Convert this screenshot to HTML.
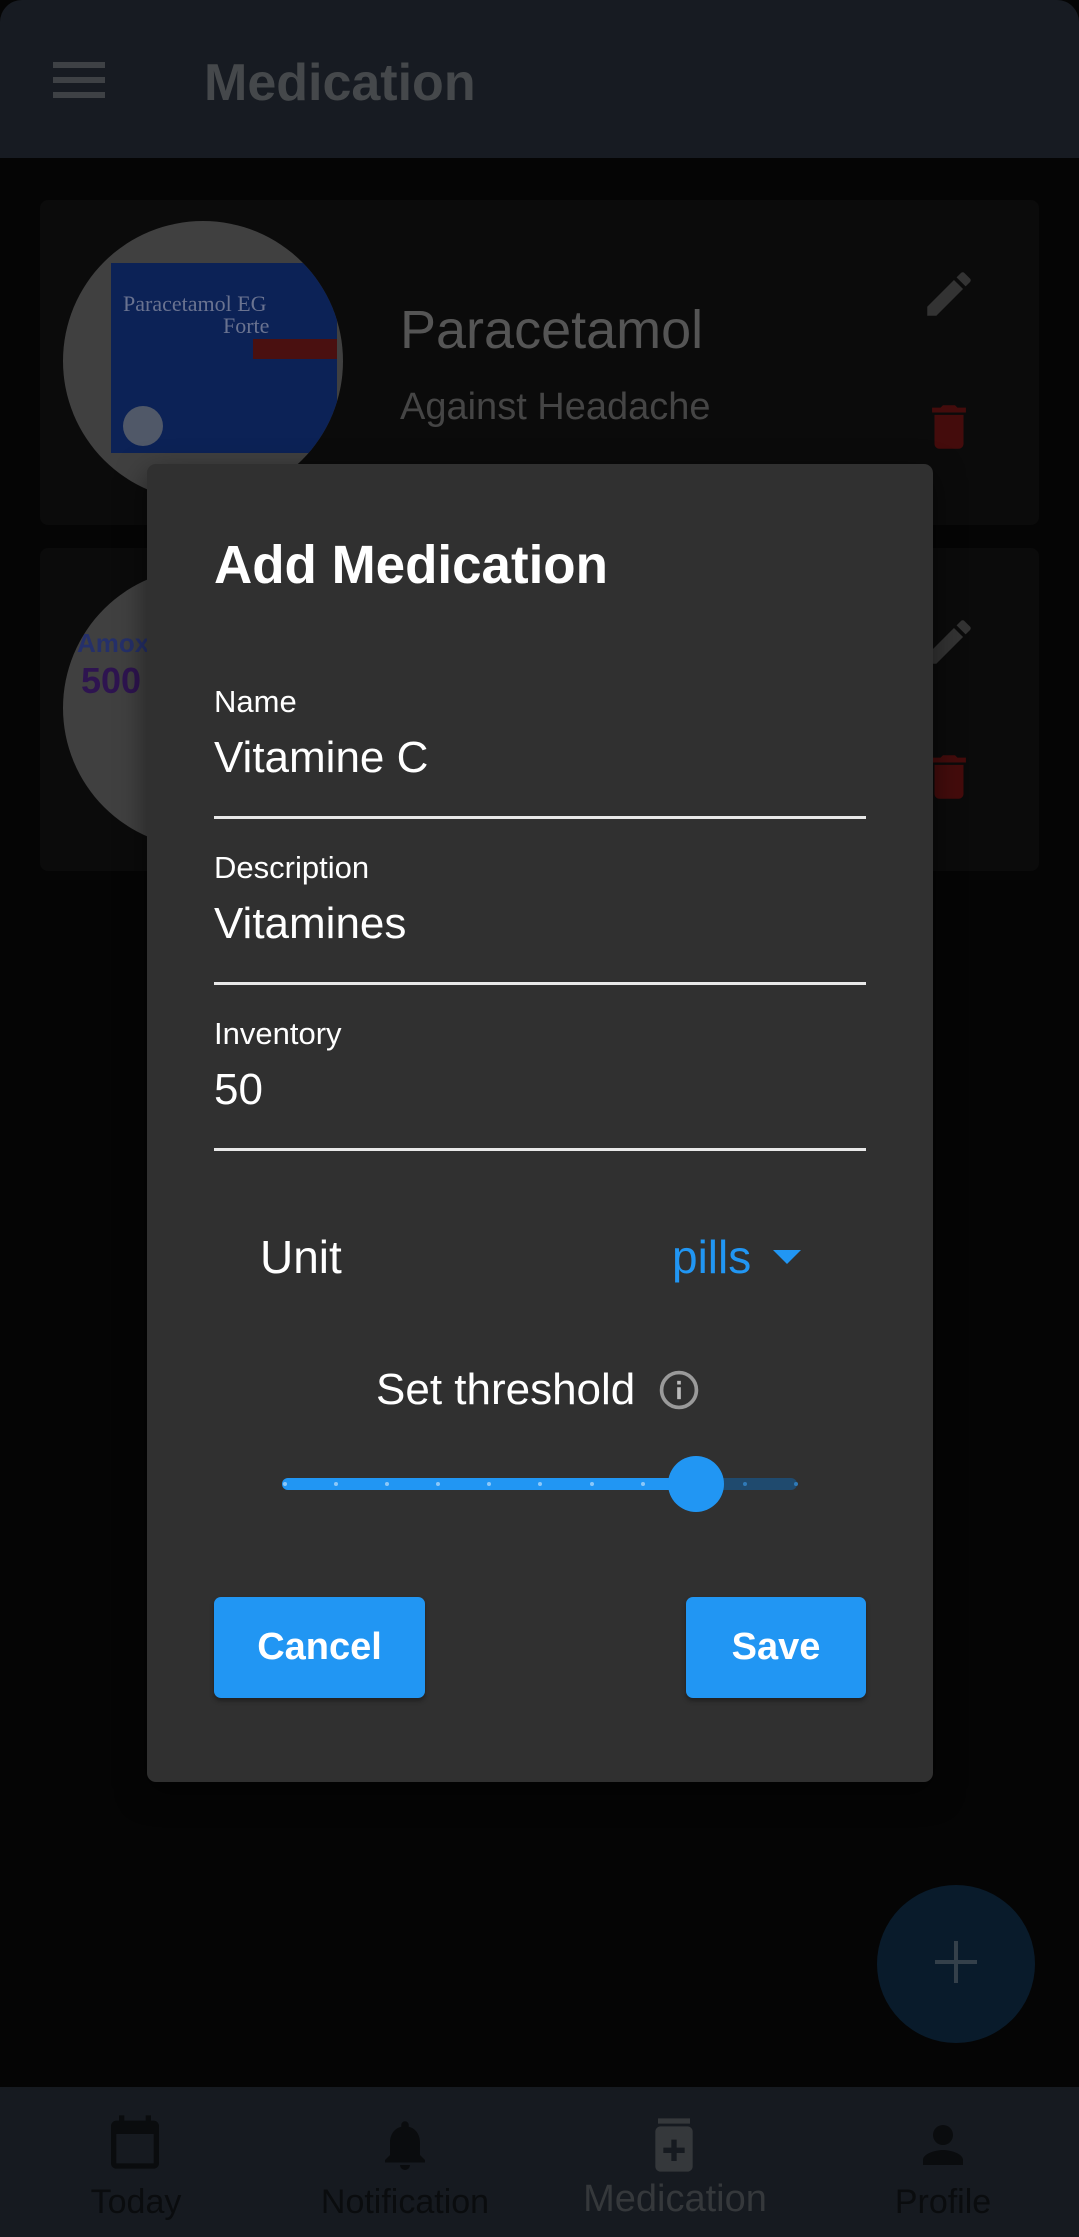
<!DOCTYPE html>
<html><head><meta charset="utf-8"><style>
*{margin:0;padding:0;box-sizing:border-box}
body{width:1079px;height:2237px;background:#050505;position:relative;overflow:hidden;font-family:"Liberation Sans",Arial,sans-serif}
.a{position:absolute;white-space:nowrap}
</style></head><body>
<!-- app bar -->
<div class="a" style="left:0;top:0;width:1079px;height:158px;background:#171b22;border-radius:22px 22px 0 0"></div>
<div class="a" style="left:53px;top:62px;width:52px;height:6px;background:#3e4145"></div>
<div class="a" style="left:53px;top:77px;width:52px;height:6px;background:#3e4145"></div>
<div class="a" style="left:53px;top:92px;width:52px;height:6px;background:#3e4145"></div>
<div class="a" style="left:204px;top:54px;font-size:52px;line-height:58px;font-weight:bold;color:#45484b">Medication</div>

<!-- cards -->
<div class="a" style="left:40px;top:200px;width:999px;height:325px;background:#0b0b0b;border-radius:8px"></div>
<div class="a" style="left:40px;top:548px;width:999px;height:323px;background:#0b0b0b;border-radius:8px"></div>
<div class="a" style="left:63px;top:221px;width:280px;height:280px;border-radius:50%;background:#404040;overflow:hidden">
  <div class="a" style="left:48px;top:42px;width:226px;height:190px;background:#0c2256"></div>
  <div class="a" style="left:60px;top:70px;font-size:22px;color:#6a7390;font-family:'Liberation Serif',serif">Paracetamol EG</div>
  <div class="a" style="left:160px;top:92px;font-size:22px;color:#6a7390;font-family:'Liberation Serif',serif">Forte</div>
  <div class="a" style="left:190px;top:118px;width:84px;height:20px;background:#4a1010"></div>
  <div class="a" style="left:60px;top:185px;width:40px;height:40px;border-radius:50%;background:#505868"></div>
</div>
<div class="a" style="left:63px;top:568px;width:280px;height:280px;border-radius:50%;background:#404040;overflow:hidden">
  <div class="a" style="left:14px;top:60px;font-size:26px;color:#25306a;font-weight:bold">Amoxi</div>
  <div class="a" style="left:18px;top:92px;font-size:36px;color:#2e1450;font-weight:bold">500</div>
</div>
<div class="a" style="left:400px;top:302px;font-size:54px;line-height:56px;color:#555">Paracetamol</div>
<div class="a" style="left:400px;top:387px;font-size:38px;line-height:40px;color:#454545">Against Headache</div>
<svg class="a" style="left:920px;top:265px" width="58" height="58" viewBox="0 0 24 24"><path fill="#333" d="M3 17.25V21h3.75L17.81 9.94l-3.75-3.75L3 17.25zM20.71 7.04a1 1 0 0 0 0-1.41l-2.34-2.34a1 1 0 0 0-1.41 0l-1.83 1.83 3.75 3.75 1.83-1.83z"/></svg>
<svg class="a" style="left:920px;top:398px" width="58" height="58" viewBox="0 0 24 24"><path fill="#440c0c" d="M6 19c0 1.1.9 2 2 2h8c1.1 0 2-.9 2-2V7H6v12zM19 4h-3.5l-1-1h-5l-1 1H5v2h14V4z"/></svg>
<svg class="a" style="left:920px;top:613px" width="58" height="58" viewBox="0 0 24 24"><path fill="#333" d="M3 17.25V21h3.75L17.81 9.94l-3.75-3.75L3 17.25zM20.71 7.04a1 1 0 0 0 0-1.41l-2.34-2.34a1 1 0 0 0-1.41 0l-1.83 1.83 3.75 3.75 1.83-1.83z"/></svg>
<svg class="a" style="left:920px;top:748px" width="58" height="58" viewBox="0 0 24 24"><path fill="#440c0c" d="M6 19c0 1.1.9 2 2 2h8c1.1 0 2-.9 2-2V7H6v12zM19 4h-3.5l-1-1h-5l-1 1H5v2h14V4z"/></svg>

<!-- dialog -->
<div class="a" style="left:147px;top:464px;width:786px;height:1318px;background:#303030;border-radius:9px;box-shadow:0 10px 30px rgba(0,0,0,.5)"></div>
<div class="a" style="left:214px;top:536px;font-size:54px;line-height:58px;font-weight:bold;color:#fff;transform:scaleX(.98);transform-origin:left">Add Medication</div>

<div class="a" style="left:214px;top:685px;font-size:31px;line-height:34px;color:#fff">Name</div>
<div class="a" style="left:214px;top:734px;font-size:44px;line-height:48px;color:#fff">Vitamine C</div>
<div class="a" style="left:214px;top:816px;width:652px;height:3px;background:#e8e8e8"></div>

<div class="a" style="left:214px;top:851px;font-size:31px;line-height:34px;color:#fff">Description</div>
<div class="a" style="left:214px;top:900px;font-size:44px;line-height:48px;color:#fff">Vitamines</div>
<div class="a" style="left:214px;top:982px;width:652px;height:3px;background:#e8e8e8"></div>

<div class="a" style="left:214px;top:1017px;font-size:31px;line-height:34px;color:#fff">Inventory</div>
<div class="a" style="left:214px;top:1066px;font-size:44px;line-height:48px;color:#fff">50</div>
<div class="a" style="left:214px;top:1148px;width:652px;height:3px;background:#e8e8e8"></div>

<div class="a" style="left:260px;top:1232px;font-size:46px;line-height:50px;color:#fff">Unit</div>
<div class="a" style="left:672px;top:1232px;font-size:46px;line-height:50px;color:#2196f3">pills</div>
<div class="a" style="left:773px;top:1250px;width:0;height:0;border-left:14px solid transparent;border-right:14px solid transparent;border-top:14px solid #2196f3"></div>

<div class="a" style="left:376px;top:1366px;font-size:44px;line-height:48px;color:#fff">Set threshold</div>
<svg class="a" style="left:657px;top:1368px" width="44" height="44" viewBox="0 0 24 24"><circle cx="12" cy="12" r="9.5" fill="none" stroke="#9a9a9a" stroke-width="2"/><rect x="11" y="10.5" width="2" height="6.5" fill="#bbb"/><rect x="11" y="7" width="2" height="2" fill="#bbb"/></svg>

<!-- slider -->
<div class="a" style="left:282px;top:1478px;width:515px;height:12px;border-radius:6px;background:#1f4a6e"></div>
<div class="a" style="left:282px;top:1478px;width:415px;height:12px;border-radius:6px;background:#2196f3"></div>
<div class="a" style="left:283px;top:1482px;width:515px;height:4px;display:flex;justify-content:space-between">
<i style="width:4px;height:4px;border-radius:50%;background:#8cc8f8"></i><i style="width:4px;height:4px;border-radius:50%;background:#8cc8f8"></i><i style="width:4px;height:4px;border-radius:50%;background:#8cc8f8"></i><i style="width:4px;height:4px;border-radius:50%;background:#8cc8f8"></i><i style="width:4px;height:4px;border-radius:50%;background:#8cc8f8"></i><i style="width:4px;height:4px;border-radius:50%;background:#8cc8f8"></i><i style="width:4px;height:4px;border-radius:50%;background:#8cc8f8"></i><i style="width:4px;height:4px;border-radius:50%;background:#8cc8f8"></i><i style="width:4px;height:4px;border-radius:50%;background:#8cc8f8"></i><i style="width:4px;height:4px;border-radius:50%;background:#2f7ab8"></i><i style="width:4px;height:4px;border-radius:50%;background:#2f7ab8"></i></div>
<div class="a" style="left:668px;top:1456px;width:56px;height:56px;border-radius:50%;background:#2196f3"></div>

<!-- buttons -->
<div class="a" style="left:214px;top:1597px;width:211px;height:101px;background:#2196f3;border-radius:7px;box-shadow:0 3px 5px rgba(0,0,0,.35);color:#fff;font-weight:bold;font-size:38px;line-height:101px;text-align:center">Cancel</div>
<div class="a" style="left:686px;top:1597px;width:180px;height:101px;background:#2196f3;border-radius:7px;box-shadow:0 3px 5px rgba(0,0,0,.35);color:#fff;font-weight:bold;font-size:38px;line-height:101px;text-align:center">Save</div>

<!-- FAB -->
<div class="a" style="left:877px;top:1885px;width:158px;height:158px;border-radius:50%;background:#091b2b"></div>
<div class="a" style="left:935px;top:1960px;width:42px;height:4px;background:#34404a"></div>
<div class="a" style="left:954px;top:1941px;width:4px;height:42px;background:#34404a"></div>

<!-- bottom nav -->
<div class="a" style="left:0;top:2087px;width:1079px;height:150px;background:#161a20"></div>
<svg class="a" style="left:103px;top:2110px" width="64" height="64" viewBox="0 0 24 24"><path fill="#0a0c0e" d="M19 4h-1V2h-2v2H8V2H6v2H5a2 2 0 0 0-2 2v14a2 2 0 0 0 2 2h14a2 2 0 0 0 2-2V6a2 2 0 0 0-2-2zm0 16H5V9h14v11z"/></svg>
<svg class="a" style="left:375px;top:2115px" width="60" height="60" viewBox="0 0 24 24"><path fill="#0a0c0e" d="M12 22a2 2 0 0 0 2-2h-4a2 2 0 0 0 2 2zm6-6v-5c0-3.07-1.64-5.64-4.5-6.32V4a1.5 1.5 0 0 0-3 0v.68C7.63 5.36 6 7.92 6 11v5l-2 2v1h16v-1l-2-2z"/></svg>
<svg class="a" style="left:642px;top:2113px" width="64" height="64" viewBox="0 0 24 24"><path fill="#35383b" d="M6 2h12v2H6zM7 5h10a2 2 0 0 1 2 2v13a2 2 0 0 1-2 2H7a2 2 0 0 1-2-2V7a2 2 0 0 1 2-2zm4 5v3H8v2h3v3h2v-3h3v-2h-3v-3z"/></svg>
<svg class="a" style="left:913px;top:2115px" width="60" height="60" viewBox="0 0 24 24"><path fill="#0a0c0e" d="M12 12a4 4 0 1 0 0-8 4 4 0 0 0 0 8zm0 2c-2.67 0-8 1.34-8 4v2h16v-2c0-2.66-5.33-4-8-4z"/></svg>
<div class="a" style="left:0;top:2183px;width:272px;text-align:center;font-size:34px;line-height:38px;color:#0a0c0e">Today</div>
<div class="a" style="left:270px;top:2183px;width:270px;text-align:center;font-size:34px;line-height:38px;color:#0a0c0e">Notification</div>
<div class="a" style="left:540px;top:2178px;width:270px;text-align:center;font-size:38px;line-height:42px;color:#35383b">Medication</div>
<div class="a" style="left:808px;top:2183px;width:270px;text-align:center;font-size:34px;line-height:38px;color:#0a0c0e">Profile</div>
</body></html>
